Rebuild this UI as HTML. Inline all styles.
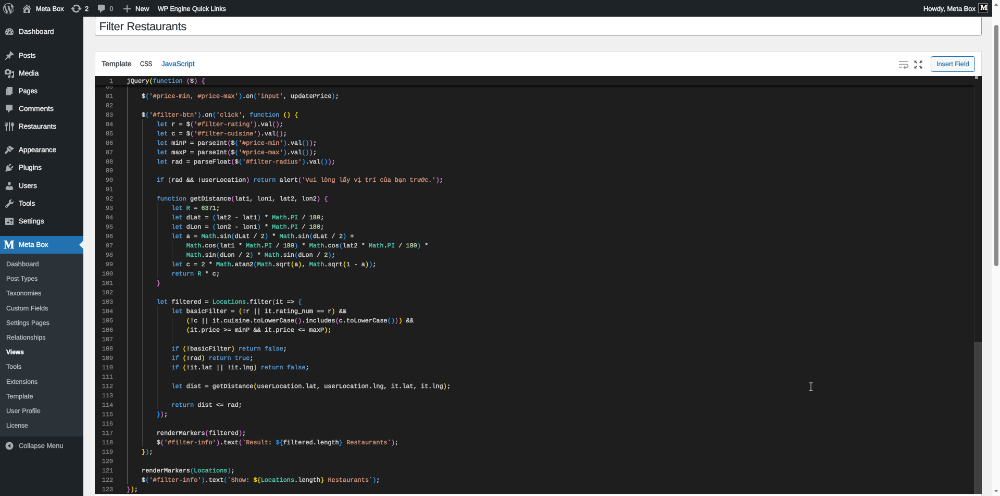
<!DOCTYPE html>
<html><head><meta charset="utf-8"><title>Edit View</title>
<style>
*{box-sizing:border-box}
html,body{margin:0;padding:0;width:1000px;height:496px;overflow:hidden;background:#f0f0f1}
body{font-family:"Liberation Sans",sans-serif}
@keyframes zz{from{transform:scale(1)}to{transform:scale(0.5208333)}}
#stage{animation:zz 1s linear -1s 1 forwards paused;will-change:transform;text-rendering:geometricPrecision;-webkit-font-smoothing:antialiased;position:absolute;left:0;top:0;width:1920px;height:953px;transform:scale(0.5208333);transform-origin:0 0;overflow:hidden;background:#f0f0f1;font-size:13px;color:#3c434a}
#inner{position:absolute;left:0;top:0;width:1920px;height:953px;-webkit-text-stroke:0.45px currentColor}
#bar{position:absolute;left:0;top:0;width:1905px;height:32px;background:#1d2327;color:#f0f0f1;font-size:12.6px;line-height:32px;z-index:20}
#bar .it{position:absolute;top:0.5px;height:32px;white-space:nowrap}
#bar svg{position:absolute}
#menu{position:absolute;left:0;top:0;width:160px;height:953px;background:#1d2327;z-index:10}
#menu .m{position:absolute;left:0;width:160px;height:34px;color:#f0f0f1;font-size:13.4px;line-height:34.6px;padding-left:36px;white-space:nowrap}
#menu .m svg{position:absolute;left:8px;top:7px;width:20px;height:20px;fill:#a7aaad}
#menu .cur{background:#2271b1;color:#fff}
#menu .cur:after{content:"";position:absolute;right:0;top:9px;border:8px solid transparent;border-right-color:#f0f0f1}
#sub{position:absolute;left:0;top:487px;width:160px;height:351.2px;background:#2c3338}
#sub div{position:absolute;left:12px;height:28.2px;line-height:26.6px;font-size:12.5px;color:#b8bdc2;-webkit-text-stroke:0.3px currentColor;white-space:nowrap}
#sub div.on{color:#fff;font-weight:bold}
#collapse{position:absolute;left:0;top:838.6px;width:160px;height:34px;line-height:34px;color:#a7aaad;font-size:12.6px;padding-left:36px}
#title{position:absolute;left:182px;top:31.4px;width:1703px;height:37.6px;border:1px solid #989ca1;border-radius:4px;background:#fff;color:#2c3338;font-size:22px;letter-spacing:-.35px;line-height:38.8px;padding:0 0 0 7.6px;-webkit-text-stroke:0.2px currentColor;white-space:nowrap}
#box{position:absolute;left:183px;top:99px;width:1701px;height:860px;background:#fff;border:0;box-shadow:0 0 0 1px #dcdcde}
#tabs{position:absolute;left:0;top:0;width:100%;height:47px;font-size:13.5px;line-height:47px;color:#3c434a}
#tabs span{position:absolute;top:-0.1px;white-space:nowrap}
#ed{position:absolute;left:-0.8px;top:47px;width:1703px;height:802.7px;background:#1e1e1e;overflow:hidden;font-family:"Liberation Mono",monospace;font-size:11.92px;color:#d4d4d4}
.ln{position:absolute;left:0;width:100%;height:18px;line-height:18px;white-space:pre}
.no{position:absolute;left:0;top:1.5px;width:35px;-webkit-text-stroke:0.3px currentColor;text-align:right;color:#858585}
.tx{position:absolute;left:61.3px;top:1.5px;white-space:pre}
.g{position:absolute;top:0;width:1px;height:18.1px;background:#404040}
.sticky{position:absolute;left:0;top:0;width:1688.5px;height:18px;line-height:17px;background:#1e1e1e;box-shadow:0 3px 3px -1px #000;z-index:5;white-space:pre}
.k{color:#569cd6}.s{color:#ce9178}.n{color:#b5cea8}.t{color:#4ec9b0}
.b0{color:#ffd700}.b1{color:#da70d6}.b2{color:#179fff}
#vsb{position:absolute;right:0;top:0;width:14.5px;height:802.7px;border-left:1px solid #2c2c2c}
#vsb i{position:absolute;left:-2.2px;top:510.5px;width:16.7px;height:293px;background:rgba(121,121,121,.36)}
#psb{position:absolute;left:1905px;top:0;width:15px;height:953px;background:#fafafa;z-index:30}
#psb i{position:absolute;left:3.6px;top:47.5px;width:8px;height:463.5px;border-radius:4px;background:#8b8b8b}
</style></head><body>
<div id="stage"><div id="inner">
<div id="bar">
 <svg style="left:5.7px;top:5.7px" width="20.8" height="20.8" viewBox="0 0 20 20"><path fill="#a7aaad" d="M20 10c0-5.51-4.49-10-10-10C4.48 0 0 4.49 0 10c0 5.52 4.48 10 10 10 5.51 0 10-4.48 10-10zM7.78 15.37L4.37 6.22c.55-.02 1.17-.08 1.17-.08.5-.06.44-1.13-.06-1.11 0 0-1.45.11-2.37.11-.18 0-.37 0-.58-.01C4.12 2.69 6.87 1.11 10 1.11c2.33 0 4.45.87 6.05 2.34-.68-.11-1.65.39-1.65 1.58 0 .74.45 1.36.9 2.1.35.61.55 1.36.55 2.46 0 1.49-1.4 5-1.4 5l-3.03-8.37c.54-.02.82-.17.82-.17.5-.05.44-1.25-.06-1.22 0 0-1.44.12-2.38.12-.87 0-2.33-.12-2.33-.12-.5-.03-.56 1.2-.06 1.22l.92.08 1.26 3.41zM17.41 10c.24-.64.74-1.87.43-4.25.7 1.29 1.05 2.71 1.05 4.25 0 3.29-1.73 6.24-4.4 7.78.97-2.59 1.94-5.2 2.92-7.78zM6.1 18.09C3.12 16.65 1.11 13.53 1.11 10c0-1.3.23-2.48.72-3.59C3.25 10.3 4.67 14.2 6.1 18.09zm4.03-6.63l2.58 6.98c-.86.29-1.76.45-2.71.45-.79 0-1.57-.11-2.29-.33.81-2.38 1.62-4.74 2.42-7.1z"/></svg>
 <svg style="left:41.3px;top:6.3px" width="21" height="21" viewBox="0 0 20 20"><path fill="#a7aaad" d="M16 8.5l1.53 1.53-1.06 1.06L10 4.62l-6.47 6.47-1.06-1.06L10 2.5l4 4v-2h2v4zm-6-2.46l6 5.99V18H4v-5.97zM12 17v-5H8v5h4z"/></svg>
 <span class="it" style="left:69px"><span style="display:inline-block;transform:scaleX(1.005);transform-origin:0 50%">Meta Box</span></span>
 <svg style="left:135.3px;top:5.2px" width="23" height="23" viewBox="0 0 20 20"><path fill="#a7aaad" d="M10.2 3.28c3.53 0 6.43 2.61 6.92 6h2.08l-3.5 4-3.5-4h2.32c-.45-1.97-2.21-3.45-4.32-3.45-1.45 0-2.73.71-3.54 1.78L4.95 5.66C6.23 4.2 8.11 3.28 10.2 3.28zm-.4 13.44c-3.52 0-6.43-2.61-6.92-6H.8l3.5-4c1.17 1.33 2.33 2.67 3.5 4H5.48c.45 1.97 2.21 3.45 4.32 3.45 1.45 0 2.73-.71 3.54-1.78l1.71 1.95c-1.28 1.46-3.15 2.38-5.25 2.38z"/></svg>
 <span class="it" style="left:163px">2</span>
 <svg style="left:185.4px;top:7px" width="20" height="20" viewBox="0 0 20 20"><path fill="#a7aaad" d="M5 2h9c1.1 0 2 .9 2 2v7c0 1.1-.9 2-2 2h-2l-5 5v-5H5c-1.1 0-2-.9-2-2V4c0-1.1.9-2 2-2z"/></svg>
 <span class="it" style="left:210.6px;color:#a7aaad">0</span>
 <svg style="left:233.6px;top:7px" width="20" height="20" viewBox="0 0 20 20"><path fill="#a7aaad" d="M17 9v2h-6v6H9v-6H3V9h6V3h2v6h6z"/></svg>
 <span class="it" style="left:259.5px"><span style="display:inline-block;transform:scaleX(1.043);transform-origin:0 50%">New</span></span>
 <span class="it" style="left:303px"><span style="display:inline-block;transform:scaleX(0.996);transform-origin:0 50%">WP Engine Quick Links</span></span>
 <span class="it" style="left:1772.5px"><span style="display:inline-block;transform:scaleX(1.021);transform-origin:0 50%">Howdy, Meta Box</span></span>
 <div style="position:absolute;left:1878px;top:6px;width:19px;height:19px;background:#0a0a0a;border:1px solid #8c8f94;color:#fff;font-family:'Liberation Serif',serif;font-weight:bold;font-size:14px;line-height:17.5px;text-align:left;padding-left:3.5px;overflow:hidden">M</div>
</div>
<div id="menu">
 <div class="m" style="top:44.0px"><svg viewBox="0 0 20 20"><path d="M3.76 16h12.48c1.1-1.37 1.76-3.11 1.76-5 0-4.42-3.58-8-8-8s-8 3.58-8 8c0 1.89.66 3.63 1.76 5zM10 4c.55 0 1 .45 1 1s-.45 1-1 1-1-.45-1-1 .45-1 1-1zM6 6c.55 0 1 .45 1 1s-.45 1-1 1-1-.45-1-1 .45-1 1-1zm8 0c.55 0 1 .45 1 1s-.45 1-1 1-1-.45-1-1 .45-1 1-1zm-5.37 5.55L12 7v6c0 1.1-.9 2-2 2s-2-.9-2-2c0-.57.24-1.08.63-1.45zM4 10c.55 0 1 .45 1 1s-.45 1-1 1-1-.45-1-1 .45-1 1-1zm12 0c.55 0 1 .45 1 1s-.45 1-1 1-1-.45-1-1 .45-1 1-1zm-5 3c0-.55-.45-1-1-1s-1 .45-1 1 .45 1 1 1 1-.45 1-1z"/></svg><span style="display:inline-block;transform:scaleX(1.030);transform-origin:0 50%">Dashboard</span></div>
 <div class="m" style="top:89.5px"><svg viewBox="0 0 20 20"><path d="M10.44 3.02l1.82-1.82 6.36 6.35-1.83 1.82c-1.05-.68-2.48-.57-3.41.36l-.75.75c-.92.93-1.04 2.35-.35 3.41l-1.83 1.82-2.41-2.41-2.8 2.79c-.42.42-3.38 2.71-3.8 2.29s1.86-3.39 2.28-3.81l2.79-2.79L4.1 9.36l1.83-1.82c1.05.69 2.48.57 3.4-.36l.75-.75c.93-.92 1.05-2.35.36-3.41z"/></svg><span style="display:inline-block;transform:scaleX(0.973);transform-origin:0 50%">Posts</span></div>
 <div class="m" style="top:123.5px"><svg viewBox="0 0 20 20"><path d="M13 11V4c0-.55-.45-1-1-1h-1.67L9 1H5L3.67 3H2c-.55 0-1 .45-1 1v7c0 .55.45 1 1 1h10c.55 0 1-.45 1-1zM7 4.5c1.38 0 2.5 1.12 2.5 2.5S8.380 9.500 7 9.500 4.500 8.380 4.500 7 5.620 4.500 7 4.500zM14 6h5v10.500c0 1.380-1.120 2.500-2.500 2.500S14 17.880 14 16.500s1.120-2.500 2.500-2.500c.170 0 .340.020.500.050V9h-3V6zm-4 8.050V13h2v3.500c0 1.380-1.120 2.500-2.500 2.500S7 17.880 7 16.500 8.120 14 9.500 14c.17 0 .34.020.5.050z"/></svg><span style="display:inline-block;transform:scaleX(1.052);transform-origin:0 50%">Media</span></div>
 <div class="m" style="top:157.5px"><svg viewBox="0 0 20 20"><path d="M6 15V2h10v13H6zm-1 1h8v2H3V5h2v11z"/></svg><span style="display:inline-block;transform:scaleX(0.947);transform-origin:0 50%">Pages</span></div>
 <div class="m" style="top:191.5px"><svg viewBox="0 0 20 20"><path d="M5 2h9c1.1 0 2 .9 2 2v7c0 1.1-.9 2-2 2h-2l-5 5v-5H5c-1.1 0-2-.9-2-2V4c0-1.1.9-2 2-2z"/></svg><span style="display:inline-block;transform:scaleX(1.033);transform-origin:0 50%">Comments</span></div>
 <div class="m" style="top:225.5px"><svg viewBox="0 0 20 20"><path d="M1.2 2.2h1.3v4.500h.9V2.200h1.300v4.500h.9V2.200h1.300v5.300c0 1.100-.8 1.900-1.800 2.100V18.500H3V9.600C2 9.400 1.200 8.600 1.200 7.500zM9 1h2.200c.3 2 .5 5 0 8v9.500H9zM16 2c1.700 0 2.800 1.900 2.800 4.200 0 1.900-.8 3.300-1.900 3.800v8.500h-1.800V10c-1.100-.5-1.900-1.900-1.900-3.800C13.200 3.900 14.300 2 16 2z"/></svg><span style="display:inline-block;transform:scaleX(0.999);transform-origin:0 50%">Restaurants</span></div>
 <div class="m" style="top:271.0px"><svg viewBox="0 0 20 20"><path d="M14.480 11.060L7.410 3.990l1.500-1.500c.500-.560 2.300-.470 3.510.320 1.210.800 1.430 1.280 2.910 2.100 1.180.640 2.450 1.260 4.450.850zm-.710.710L6.700 4.700 4.930 6.470c-.390.390-.390 1.020 0 1.410l1.060 1.060c.390.390.390 1.030 0 1.420-.600.600-1.430 1.110-2.210 1.690-.350.260-.700.530-1.010.840C1.430 14.230.400 16.080 1.400 17.070c.990 1 2.840-.030 4.180-1.360.310-.310.580-.660.850-1.020.570-.780 1.080-1.610 1.690-2.210.390-.390 1.020-.390 1.410 0l1.060 1.060c.390.390 1.020.390 1.410 0z"/></svg>Appearance</div>
 <div class="m" style="top:305.0px"><svg viewBox="0 0 20 20"><path d="M13.110 4.360L9.870 7.600 8 5.730l3.240-3.240c.350-.340 1.050-.200 1.560.320.520.510.660 1.210.310 1.550zm-8 1.770l.910-1.120 9.010 9.010-1.190.840c-.710.710-2.630 1.160-3.820 1.160H6.140L4.900 17.260c-.590.590-1.540.590-2.120 0-.590-.580-.590-1.530 0-2.120l1.240-1.240v-3.880c0-1.130.400-3.190 1.090-3.890zm7.260 3.970l3.240-3.240c.340-.350 1.040-.210 1.550.310.520.510.660 1.210.310 1.550l-3.240 3.250z"/></svg>Plugins</div>
 <div class="m" style="top:339.7px"><svg viewBox="0 0 20 20"><path d="M10 9.250c-2.270 0-2.730-3.440-2.730-3.440C7 4.020 7.820 2 9.970 2c2.160 0 2.980 2.020 2.710 3.810 0 0-.410 3.440-2.680 3.440zm0 2.570L12.720 10c2.390 0 4.520 2.330 4.520 4.530v2.490s-3.650 1.130-7.240 1.130c-3.650 0-7.240-1.130-7.240-1.130v-2.490c0-2.250 1.940-4.480 4.470-4.480z"/></svg>Users</div>
 <div class="m" style="top:373.7px"><svg viewBox="0 0 20 20"><path d="M16.680 9.770c-1.340 1.340-3.300 1.670-4.950.990l-5.410 6.520c-.990.990-2.590.990-3.580 0s-.990-2.590 0-3.570l6.520-5.420c-.680-1.650-.350-3.610.990-4.950 1.280-1.280 3.120-1.620 4.720-1.060l-2.890 2.890 2.820 2.820 2.860-2.870c.530 1.580.180 3.390-1.080 4.650zM3.810 16.210c.400.390 1.040.390 1.430 0 .400-.400.400-1.040 0-1.430-.390-.400-1.030-.400-1.430 0-.390.390-.390 1.030 0 1.430z"/></svg>Tools</div>
 <div class="m" style="top:407.7px"><svg viewBox="0 0 20 20"><path d="M18 16V4c0-.55-.45-1-1-1H3c-.55 0-1 .45-1 1v12c0 .55.45 1 1 1h14c.55 0 1-.45 1-1zM8 11h1c.55 0 1 .45 1 1s-.45 1-1 1H8v1.500c0 .280-.220.500-.500.500s-.500-.220-.500-.500V13H6c-.55 0-1-.45-1-1s.45-1 1-1h1V5.500c0-.280.220-.500.500-.500s.500.220.500.500V11zm5-2h-1c-.55 0-1-.45-1-1s.45-1 1-1h1V5.500c0-.280.220-.500.500-.500s.500.220.500.500V7h1c.55 0 1 .45 1 1s-.45 1-1 1h-1v5.500c0 .280-.220.500-.500.500s-.500-.220-.500-.500V9z"/></svg>Settings</div>
 <div class="m cur" style="top:453.0px"><span style="position:absolute;left:7px;top:0;font-family:'Liberation Serif',serif;font-weight:bold;font-size:23px;color:#fff;transform:scaleX(.95);transform-origin:0 50%">M</span>Meta Box</div>
 <div id="sub">
  <div style="top:7px"><span style="display:inline-block;transform:scaleX(1.025);transform-origin:0 50%">Dashboard</span></div>
  <div style="top:35.2px"><span style="display:inline-block;transform:scaleX(0.979);transform-origin:0 50%">Post Types</span></div>
  <div style="top:63.4px"><span style="display:inline-block;transform:scaleX(1.009);transform-origin:0 50%">Taxonomies</span></div>
  <div style="top:91.6px"><span style="display:inline-block;transform:scaleX(1.004);transform-origin:0 50%">Custom Fields</span></div>
  <div style="top:119.8px"><span style="display:inline-block;transform:scaleX(0.986);transform-origin:0 50%">Settings Pages</span></div>
  <div style="top:148px"><span style="display:inline-block;transform:scaleX(1.007);transform-origin:0 50%">Relationships</span></div>
  <div class="on" style="top:176.2px"><span style="display:inline-block;transform:scaleX(0.963);transform-origin:0 50%">Views</span></div>
  <div style="top:204.4px"><span style="display:inline-block;transform:scaleX(1.007);transform-origin:0 50%">Tools</span></div>
  <div style="top:232.6px"><span style="display:inline-block;transform:scaleX(0.983);transform-origin:0 50%">Extensions</span></div>
  <div style="top:260.8px"><span style="display:inline-block;transform:scaleX(1.019);transform-origin:0 50%">Template</span></div>
  <div style="top:289px"><span style="display:inline-block;transform:scaleX(1.009);transform-origin:0 50%">User Profile</span></div>
  <div style="top:317.2px"><span style="display:inline-block;transform:scaleX(0.972);transform-origin:0 50%">License</span></div>
 </div>
 <div id="collapse"><svg style="position:absolute;left:8px;top:7px" width="20" height="20" viewBox="0 0 20 20"><path fill="#a7aaad" d="M10 2.500c-4.140 0-7.500 3.360-7.500 7.500s3.360 7.500 7.500 7.500 7.500-3.360 7.500-7.500-3.360-7.500-7.500-7.500zM12 14l-5-4 5-4v8z" fill-rule="evenodd"/></svg><span style="display:inline-block;transform:scaleX(1.017);transform-origin:0 50%">Collapse Menu</span></div>
</div>
<div id="title">Filter Restaurants</div>
<div id="box">
 <div id="tabs">
  <span style="left:11.6px"><span style="display:inline-block;transform:scaleX(1.051);transform-origin:0 50%">Template</span></span><span style="left:86.3px"><span style="display:inline-block;transform:scaleX(0.839);transform-origin:0 50%">CSS</span></span><span style="left:126.6px;color:#2271b1"><span style="display:inline-block;transform:scaleX(1.006);transform-origin:0 50%">JavaScript</span></span>
  <svg style="position:absolute;left:1541.7px;top:14.5px" width="20" height="20" viewBox="0 0 20 20" fill="none" stroke="#8f9296" stroke-width="1.7"><path d="M1 4h18M1 9.500h14.500a3 3 0 0 1 0 6H11M1 15h6"/><path d="M13 13l-2.500 2.500L13 18" /></svg>
  <svg style="position:absolute;left:1570px;top:14.5px" width="20" height="20" viewBox="0 0 20 20" fill="#50575e"><path d="M2.5 2.5h4.6L5.600 4 8 6.400 6.400 8 4 5.600 2.500 7.100zM17.500 2.500v4.600L16 5.600 13.600 8 12 6.400 14.400 4 12.900 2.500zM2.500 17.500v-4.600L4 14.400 6.400 12 8 13.600 5.600 16 7.100 17.500zM17.500 17.500h-4.600L14.400 16 12 13.600 13.600 12 16 14.400 17.500 12.900z"/></svg>
  <div style="position:absolute;left:1603.5px;top:8.5px;width:85px;height:30px;border:1.3px solid #2271b1;border-radius:3.5px;background:#f6f7f7;color:#2271b1;font-size:12.6px;line-height:30.3px;padding-left:10.5px;white-space:nowrap;-webkit-text-stroke:0.2px currentColor"><span style="display:inline-block;transform:scaleX(1.008);transform-origin:0 50%">Insert Field</span></div>
 </div>
 <div id="ed">
<div class="ln" style="top:10.23px"><span class="no">80</span><i class="g" style="left:62.20px;background:#626262"></i><span class="tx"></span></div>
<div class="ln" style="top:28.20px"><span class="no">81</span><i class="g" style="left:62.20px;background:#626262"></i><span class="tx">    $<span class="b2">(</span><span class="s">'#price-min, #price-max'</span><span class="b2">)</span>.on<span class="b2">(</span><span class="s">'input'</span>, updatePrice<span class="b2">)</span>;</span></div>
<div class="ln" style="top:46.17px"><span class="no">82</span><i class="g" style="left:62.20px;background:#626262"></i><span class="tx"></span></div>
<div class="ln" style="top:64.14px"><span class="no">83</span><i class="g" style="left:62.20px;background:#626262"></i><span class="tx">    $<span class="b2">(</span><span class="s">'#filter-btn'</span><span class="b2">)</span>.on<span class="b2">(</span><span class="s">'click'</span>, <span class="k">function</span> <span class="b0">(</span><span class="b0">)</span> <span class="b0">{</span></span></div>
<div class="ln" style="top:82.12px"><span class="no">84</span><i class="g" style="left:62.20px;background:#626262"></i><i class="g" style="left:90.81px;background:#424242"></i><span class="tx">        <span class="k">let</span> r = $<span class="b1">(</span><span class="s">'#filter-rating'</span><span class="b1">)</span>.val<span class="b1">(</span><span class="b1">)</span>;</span></div>
<div class="ln" style="top:100.09px"><span class="no">85</span><i class="g" style="left:62.20px;background:#626262"></i><i class="g" style="left:90.81px;background:#424242"></i><span class="tx">        <span class="k">let</span> c = $<span class="b1">(</span><span class="s">'#filter-cuisine'</span><span class="b1">)</span>.val<span class="b1">(</span><span class="b1">)</span>;</span></div>
<div class="ln" style="top:118.06px"><span class="no">86</span><i class="g" style="left:62.20px;background:#626262"></i><i class="g" style="left:90.81px;background:#424242"></i><span class="tx">        <span class="k">let</span> minP = parseInt<span class="b1">(</span>$<span class="b2">(</span><span class="s">'#price-min'</span><span class="b2">)</span>.val<span class="b2">(</span><span class="b2">)</span><span class="b1">)</span>;</span></div>
<div class="ln" style="top:136.03px"><span class="no">87</span><i class="g" style="left:62.20px;background:#626262"></i><i class="g" style="left:90.81px;background:#424242"></i><span class="tx">        <span class="k">let</span> maxP = parseInt<span class="b1">(</span>$<span class="b2">(</span><span class="s">'#price-max'</span><span class="b2">)</span>.val<span class="b2">(</span><span class="b2">)</span><span class="b1">)</span>;</span></div>
<div class="ln" style="top:154.00px"><span class="no">88</span><i class="g" style="left:62.20px;background:#626262"></i><i class="g" style="left:90.81px;background:#424242"></i><span class="tx">        <span class="k">let</span> rad = parseFloat<span class="b1">(</span>$<span class="b2">(</span><span class="s">'#filter-radius'</span><span class="b2">)</span>.val<span class="b2">(</span><span class="b2">)</span><span class="b1">)</span>;</span></div>
<div class="ln" style="top:171.98px"><span class="no">89</span><i class="g" style="left:62.20px;background:#626262"></i><i class="g" style="left:90.81px;background:#424242"></i><span class="tx"></span></div>
<div class="ln" style="top:189.95px"><span class="no">90</span><i class="g" style="left:62.20px;background:#626262"></i><i class="g" style="left:90.81px;background:#424242"></i><span class="tx">        <span class="k">if</span> <span class="b1">(</span>rad &amp;&amp; !userLocation<span class="b1">)</span> <span class="k">return</span> alert<span class="b1">(</span><span class="s">'Vui lòng lấy vị trí của bạn trước.'</span><span class="b1">)</span>;</span></div>
<div class="ln" style="top:207.92px"><span class="no">91</span><i class="g" style="left:62.20px;background:#626262"></i><i class="g" style="left:90.81px;background:#424242"></i><span class="tx"></span></div>
<div class="ln" style="top:225.89px"><span class="no">92</span><i class="g" style="left:62.20px;background:#626262"></i><i class="g" style="left:90.81px;background:#424242"></i><span class="tx">        <span class="k">function</span> getDistance<span class="b1">(</span>lat1, lon1, lat2, lon2<span class="b1">)</span> <span class="b1">{</span></span></div>
<div class="ln" style="top:243.86px"><span class="no">93</span><i class="g" style="left:62.20px;background:#626262"></i><i class="g" style="left:90.81px;background:#424242"></i><i class="g" style="left:119.42px;background:#323232"></i><span class="tx">            <span class="k">let</span> <span class="t">R</span> = <span class="n">6371</span>;</span></div>
<div class="ln" style="top:261.84px"><span class="no">94</span><i class="g" style="left:62.20px;background:#626262"></i><i class="g" style="left:90.81px;background:#424242"></i><i class="g" style="left:119.42px;background:#323232"></i><span class="tx">            <span class="k">let</span> dLat = <span class="b2">(</span>lat2 - lat1<span class="b2">)</span> * <span class="t">Math</span>.<span class="t">PI</span> / <span class="n">180</span>;</span></div>
<div class="ln" style="top:279.81px"><span class="no">95</span><i class="g" style="left:62.20px;background:#626262"></i><i class="g" style="left:90.81px;background:#424242"></i><i class="g" style="left:119.42px;background:#323232"></i><span class="tx">            <span class="k">let</span> dLon = <span class="b2">(</span>lon2 - lon1<span class="b2">)</span> * <span class="t">Math</span>.<span class="t">PI</span> / <span class="n">180</span>;</span></div>
<div class="ln" style="top:297.78px"><span class="no">96</span><i class="g" style="left:62.20px;background:#626262"></i><i class="g" style="left:90.81px;background:#424242"></i><i class="g" style="left:119.42px;background:#323232"></i><span class="tx">            <span class="k">let</span> a = <span class="t">Math</span>.sin<span class="b2">(</span>dLat / <span class="n">2</span><span class="b2">)</span> * <span class="t">Math</span>.sin<span class="b2">(</span>dLat / <span class="n">2</span><span class="b2">)</span> +</span></div>
<div class="ln" style="top:315.75px"><span class="no">97</span><i class="g" style="left:62.20px;background:#626262"></i><i class="g" style="left:90.81px;background:#424242"></i><i class="g" style="left:119.42px;background:#323232"></i><i class="g" style="left:148.02px;background:#3c3c3c"></i><span class="tx">                <span class="t">Math</span>.cos<span class="b2">(</span>lat1 * <span class="t">Math</span>.<span class="t">PI</span> / <span class="n">180</span><span class="b2">)</span> * <span class="t">Math</span>.cos<span class="b2">(</span>lat2 * <span class="t">Math</span>.<span class="t">PI</span> / <span class="n">180</span><span class="b2">)</span> *</span></div>
<div class="ln" style="top:333.72px"><span class="no">98</span><i class="g" style="left:62.20px;background:#626262"></i><i class="g" style="left:90.81px;background:#424242"></i><i class="g" style="left:119.42px;background:#323232"></i><i class="g" style="left:148.02px;background:#3c3c3c"></i><span class="tx">                <span class="t">Math</span>.sin<span class="b2">(</span>dLon / <span class="n">2</span><span class="b2">)</span> * <span class="t">Math</span>.sin<span class="b2">(</span>dLon / <span class="n">2</span><span class="b2">)</span>;</span></div>
<div class="ln" style="top:351.70px"><span class="no">99</span><i class="g" style="left:62.20px;background:#626262"></i><i class="g" style="left:90.81px;background:#424242"></i><i class="g" style="left:119.42px;background:#323232"></i><span class="tx">            <span class="k">let</span> c = <span class="n">2</span> * <span class="t">Math</span>.atan2<span class="b2">(</span><span class="t">Math</span>.sqrt<span class="b0">(</span>a<span class="b0">)</span>, <span class="t">Math</span>.sqrt<span class="b0">(</span><span class="n">1</span> - a<span class="b0">)</span><span class="b2">)</span>;</span></div>
<div class="ln" style="top:369.67px"><span class="no">100</span><i class="g" style="left:62.20px;background:#626262"></i><i class="g" style="left:90.81px;background:#424242"></i><i class="g" style="left:119.42px;background:#323232"></i><span class="tx">            <span class="k">return</span> <span class="t">R</span> * c;</span></div>
<div class="ln" style="top:387.64px"><span class="no">101</span><i class="g" style="left:62.20px;background:#626262"></i><i class="g" style="left:90.81px;background:#424242"></i><span class="tx">        <span class="b1">}</span></span></div>
<div class="ln" style="top:405.61px"><span class="no">102</span><i class="g" style="left:62.20px;background:#626262"></i><i class="g" style="left:90.81px;background:#424242"></i><span class="tx"></span></div>
<div class="ln" style="top:423.58px"><span class="no">103</span><i class="g" style="left:62.20px;background:#626262"></i><i class="g" style="left:90.81px;background:#424242"></i><span class="tx">        <span class="k">let</span> filtered = <span class="t">Locations</span>.filter<span class="b1">(</span>it =&gt; <span class="b2">{</span></span></div>
<div class="ln" style="top:441.56px"><span class="no">104</span><i class="g" style="left:62.20px;background:#626262"></i><i class="g" style="left:90.81px;background:#424242"></i><i class="g" style="left:119.42px;background:#323232"></i><span class="tx">            <span class="k">let</span> basicFilter = <span class="b0">(</span>!r || it.rating_num == r<span class="b0">)</span> &amp;&amp;</span></div>
<div class="ln" style="top:459.53px"><span class="no">105</span><i class="g" style="left:62.20px;background:#626262"></i><i class="g" style="left:90.81px;background:#424242"></i><i class="g" style="left:119.42px;background:#323232"></i><i class="g" style="left:148.02px;background:#3c3c3c"></i><span class="tx">                <span class="b0">(</span>!c || it.cuisine.toLowerCase<span class="b1">(</span><span class="b1">)</span>.includes<span class="b1">(</span>c.toLowerCase<span class="b2">(</span><span class="b2">)</span><span class="b1">)</span><span class="b0">)</span> &amp;&amp;</span></div>
<div class="ln" style="top:477.50px"><span class="no">106</span><i class="g" style="left:62.20px;background:#626262"></i><i class="g" style="left:90.81px;background:#424242"></i><i class="g" style="left:119.42px;background:#323232"></i><i class="g" style="left:148.02px;background:#3c3c3c"></i><span class="tx">                <span class="b0">(</span>it.price &gt;= minP &amp;&amp; it.price &lt;= maxP<span class="b0">)</span>;</span></div>
<div class="ln" style="top:495.47px"><span class="no">107</span><i class="g" style="left:62.20px;background:#626262"></i><i class="g" style="left:90.81px;background:#424242"></i><i class="g" style="left:119.42px;background:#323232"></i><i class="g" style="left:148.02px;background:#3c3c3c"></i><span class="tx"></span></div>
<div class="ln" style="top:513.44px"><span class="no">108</span><i class="g" style="left:62.20px;background:#626262"></i><i class="g" style="left:90.81px;background:#424242"></i><i class="g" style="left:119.42px;background:#323232"></i><span class="tx">            <span class="k">if</span> <span class="b0">(</span>!basicFilter<span class="b0">)</span> <span class="k">return</span> <span class="k">false</span>;</span></div>
<div class="ln" style="top:531.42px"><span class="no">109</span><i class="g" style="left:62.20px;background:#626262"></i><i class="g" style="left:90.81px;background:#424242"></i><i class="g" style="left:119.42px;background:#323232"></i><span class="tx">            <span class="k">if</span> <span class="b0">(</span>!rad<span class="b0">)</span> <span class="k">return</span> <span class="k">true</span>;</span></div>
<div class="ln" style="top:549.39px"><span class="no">110</span><i class="g" style="left:62.20px;background:#626262"></i><i class="g" style="left:90.81px;background:#424242"></i><i class="g" style="left:119.42px;background:#323232"></i><span class="tx">            <span class="k">if</span> <span class="b0">(</span>!it.lat || !it.lng<span class="b0">)</span> <span class="k">return</span> <span class="k">false</span>;</span></div>
<div class="ln" style="top:567.36px"><span class="no">111</span><i class="g" style="left:62.20px;background:#626262"></i><i class="g" style="left:90.81px;background:#424242"></i><i class="g" style="left:119.42px;background:#323232"></i><span class="tx"></span></div>
<div class="ln" style="top:585.33px"><span class="no">112</span><i class="g" style="left:62.20px;background:#626262"></i><i class="g" style="left:90.81px;background:#424242"></i><i class="g" style="left:119.42px;background:#323232"></i><span class="tx">            <span class="k">let</span> dist = getDistance<span class="b0">(</span>userLocation.lat, userLocation.lng, it.lat, it.lng<span class="b0">)</span>;</span></div>
<div class="ln" style="top:603.30px"><span class="no">113</span><i class="g" style="left:62.20px;background:#626262"></i><i class="g" style="left:90.81px;background:#424242"></i><i class="g" style="left:119.42px;background:#323232"></i><span class="tx"></span></div>
<div class="ln" style="top:621.28px"><span class="no">114</span><i class="g" style="left:62.20px;background:#626262"></i><i class="g" style="left:90.81px;background:#424242"></i><i class="g" style="left:119.42px;background:#323232"></i><span class="tx">            <span class="k">return</span> dist &lt;= rad;</span></div>
<div class="ln" style="top:639.25px"><span class="no">115</span><i class="g" style="left:62.20px;background:#626262"></i><i class="g" style="left:90.81px;background:#424242"></i><span class="tx">        <span class="b2">}</span><span class="b1">)</span>;</span></div>
<div class="ln" style="top:657.22px"><span class="no">116</span><i class="g" style="left:62.20px;background:#626262"></i><i class="g" style="left:90.81px;background:#424242"></i><span class="tx"></span></div>
<div class="ln" style="top:675.19px"><span class="no">117</span><i class="g" style="left:62.20px;background:#626262"></i><i class="g" style="left:90.81px;background:#424242"></i><span class="tx">        renderMarkers<span class="b1">(</span>filtered<span class="b1">)</span>;</span></div>
<div class="ln" style="top:693.16px"><span class="no">118</span><i class="g" style="left:62.20px;background:#626262"></i><i class="g" style="left:90.81px;background:#424242"></i><span class="tx">        $<span class="b1">(</span><span class="s">'#filter-info'</span><span class="b1">)</span>.text<span class="b1">(</span><span class="s">`</span><span class="s">Result: </span><span class="b2">${</span>filtered.length<span class="b2">}</span><span class="s"> Restaurants</span><span class="s">`</span><span class="b1">)</span>;</span></div>
<div class="ln" style="top:711.14px"><span class="no">119</span><i class="g" style="left:62.20px;background:#626262"></i><span class="tx">    <span class="b0">}</span><span class="b2">)</span>;</span></div>
<div class="ln" style="top:729.11px"><span class="no">120</span><i class="g" style="left:62.20px;background:#626262"></i><span class="tx"></span></div>
<div class="ln" style="top:747.08px"><span class="no">121</span><i class="g" style="left:62.20px;background:#626262"></i><span class="tx">    renderMarkers<span class="b2">(</span><span class="t">Locations</span><span class="b2">)</span>;</span></div>
<div class="ln" style="top:765.05px"><span class="no">122</span><i class="g" style="left:62.20px;background:#626262"></i><span class="tx">    $<span class="b2">(</span><span class="s">'#filter-info'</span><span class="b2">)</span>.text<span class="b2">(</span><span class="s">`</span><span class="s">Show: </span><span class="b0">${</span><span class="t">Locations</span>.length<span class="b0">}</span><span class="s"> Restaurants</span><span class="s">`</span><span class="b2">)</span>;</span></div>
<div class="ln" style="top:783.02px"><span class="no">123</span><span class="tx"><span class="b1">}</span><span class="b0">)</span>;</span></div>
<div class="sticky"><span class="no">1</span><span class="tx">jQuery<span class="b0">(</span><span class="k">function</span> <span class="b1">(</span>$<span class="b1">)</span> <span class="b1">{</span></span></div>
  <div id="vsb"><i></i><b style="position:absolute;left:0.3px;top:0;width:6.2px;height:5.5px;background:#9a9a9a"></b></div>
 </div>
</div>
<div id="psb"><i></i>
 <svg style="position:absolute;left:2.9px;top:5.6px" width="9.4" height="5.4" viewBox="0 0 9 6"><path d="M0 6L4.500 0 9 6z" fill="#808080"/></svg>
 <svg style="position:absolute;left:2.9px;top:941.3px" width="9.4" height="4.6" viewBox="0 0 9 6"><path d="M0 0L4.500 6 9 0z" fill="#808080"/></svg>
</div>
<svg style="position:absolute;left:1553.4px;top:733.5px;z-index:40" width="8" height="17" viewBox="0 0 8 17" fill="none"><path d="M0.5 1h2.5l1 .8 1-.8h2.500M4 1.800v13.400M0.500 16h2.500l1-.8 1 .8h2.500" stroke="#111" stroke-width="2.600"/><path d="M0.500 1h2.500l1 .8 1-.8h2.500M4 1.800v13.400M0.500 16h2.500l1-.8 1 .8h2.500" stroke="#c4c4c4" stroke-width="1.300"/></svg>
</div></div>
</body></html>
